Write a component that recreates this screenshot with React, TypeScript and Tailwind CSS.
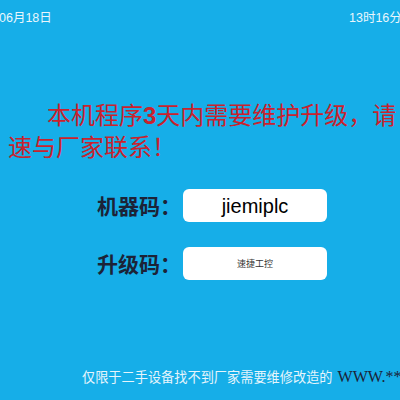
import React from "react";

const cjk = { fontFamily: '"Noto Sans CJK SC", "Noto Sans", sans-serif' };

export default function App() {
  return (
    <div className="w-[400px] h-[400px] overflow-hidden bg-[#16aee8] flex flex-col" style={cjk}>
      <div className="flex justify-between pt-[10px] text-[12.5px] leading-[16px] text-[#e9f6fc] whitespace-nowrap" style={{ fontFamily: '"Liberation Sans", "Noto Sans CJK SC", sans-serif' }}>
        <span className="ml-[-1px]">06月18日</span>
        <span className="mr-[-6px] shrink-0 w-[57px]">13时16分</span>
      </div>

      <div className="mt-[73px] text-[24px] leading-[30px] text-[#c9222d] whitespace-nowrap">
        <div className="ml-[47px]">
          本机程序<span className="font-bold" style={{ fontFamily: '"Liberation Sans", sans-serif' }}>3</span>天内需要维护升级，请
        </div>
        <div className="ml-[8px]">速与厂家联系！</div>
      </div>

      <div className="mt-[28px] flex flex-col gap-[25px] ml-[97px]">
        <div className="flex items-center">
          <div className="w-[86px] shrink-0 whitespace-nowrap text-[21px] leading-[33px] font-bold text-[#1c2337]">机器码：</div>
          <div className="w-[144px] shrink-0 h-[33px] bg-white rounded-[6px] flex items-center justify-center text-[20px] text-black" style={{ fontFamily: '"Liberation Sans", sans-serif' }}>
            jiemiplc
          </div>
        </div>
        <div className="flex items-center">
          <div className="w-[86px] shrink-0 whitespace-nowrap text-[21px] leading-[33px] font-bold text-[#1c2337]">升级码：</div>
          <div className="w-[144px] shrink-0 h-[33px] bg-white rounded-[6px] flex items-center justify-center text-[9px] text-[#333]">
            速捷工控
          </div>
        </div>
      </div>

      <div className="mt-[87px] ml-[82px] flex items-baseline whitespace-nowrap leading-[20px]">
        <span className="text-[13.2px] text-[#e6f5fc]">仅限于二手设备找不到厂家需要维修改造的</span>
        <span className="ml-[5px] text-[16px] text-[#1c2337]" style={{ fontFamily: '"Liberation Serif", serif' }}>WWW.**</span>
      </div>
    </div>
  );
}
